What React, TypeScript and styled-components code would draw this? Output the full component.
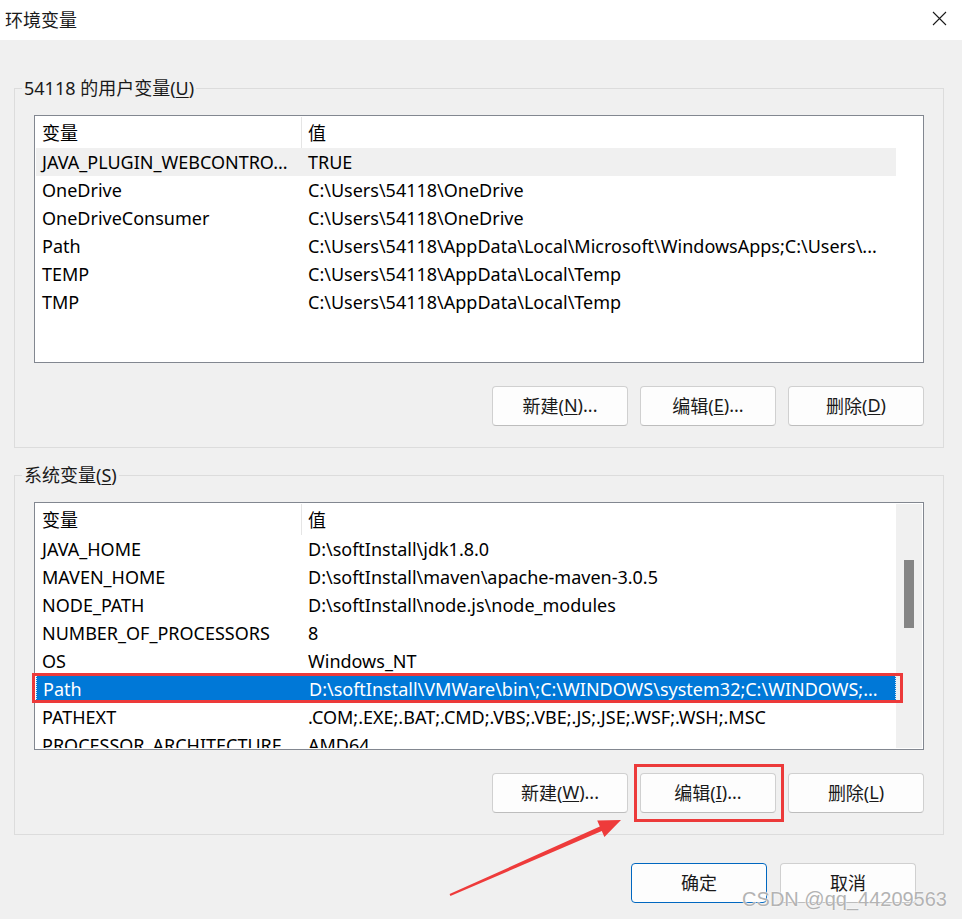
import React from 'react';
import styled, { createGlobalStyle, css } from 'styled-components';

const GlobalStyle = createGlobalStyle`
  html, body {
    margin: 0;
    padding: 0;
    background: #f0f0f0;
  }
  * {
    box-sizing: border-box;
  }
`;

const FONT = `"Noto Sans", "Noto Sans CJK SC", sans-serif`;

const Window = styled.div`
  position: relative;
  width: 962px;
  height: 919px;
  background: #f0f0f0;
  font-family: ${FONT};
  font-size: 18px;
  color: #000;
  overflow: hidden;
`;

const TitleBar = styled.div`
  height: 40px;
  background: #fff;
  display: flex;
  align-items: center;
  justify-content: space-between;
  padding-left: 5px;
`;

const Title = styled.span`
  font-size: 18px;
  color: #1a1a1a;
  margin-top: -3px;
`;

const CloseButton = styled.div`
  width: 46px;
  height: 40px;
  display: flex;
  align-items: center;
  justify-content: center;
  margin-top: -3px;
`;

const Body = styled.div`
  padding: 0 18px 0 14px;
  display: flex;
  flex-direction: column;
`;

const Group = styled.fieldset<{ $top: number }>`
  margin: ${(p) => p.$top}px 0 0;
  border: 1px solid #dcdcdc;
  padding: 15px 19px 21px;
  min-width: 0;
`;

const Legend = styled.legend`
  margin-left: -12px;
  padding: 0 2px;
  line-height: 24px;
  font-size: 18px;
  color: #1a1a1a;
`;

const List = styled.div`
  position: relative;
  height: 248px;
  border: 1px solid #828790;
  background: #fff;
  padding: 1px;
  display: flex;
`;

const Viewport = styled.div`
  flex: 1;
  min-width: 0;
  overflow: hidden;
  display: flex;
  flex-direction: column;
`;

const HeaderRow = styled.div`
  height: 31px;
  flex-shrink: 0;
  display: flex;
  align-items: center;
`;

const HeaderCell = styled.div<{ $first?: boolean }>`
  height: 100%;
  display: flex;
  align-items: center;
  padding-left: 6px;
  padding-bottom: 2px;
  ${(p) =>
    p.$first
      ? css`
          width: 266px;
          border-right: 1px solid #e5e5e5;
        `
      : css`
          flex: 1;
        `}
`;

const Row = styled.div<{ $tone?: 'hover' | 'selected' }>`
  height: 28px;
  flex-shrink: 0;
  display: flex;
  align-items: center;
  white-space: nowrap;
  padding-bottom: 1px;
  ${(p) =>
    p.$tone === 'hover' &&
    css`
      background: #f0f0f0;
    `}
  ${(p) =>
    p.$tone === 'selected' &&
    css`
      background: #0078d7;
      color: #fff;
      border-left: 1px dotted #dbe9f7;
      border-right: 1px dotted #dbe9f7;
    `}
`;

const NameCell = styled.div`
  width: 266px;
  padding-left: 6px;
  overflow: hidden;
  flex-shrink: 0;
`;

const ValueCell = styled.div`
  flex: 1;
  padding-left: 6px;
  overflow: hidden;
`;

const ScrollTrack = styled.div<{ $active?: boolean }>`
  width: 26px;
  flex-shrink: 0;
  background: ${(p) => (p.$active ? '#f0f0f0' : '#fff')};
  padding-left: 8px;
`;

const Thumb = styled.div<{ $offset: number }>`
  margin-top: ${(p) => p.$offset}px;
  width: 10px;
  height: 68px;
  background: #858585;
`;

const RowMark = styled.div<{ $row: number }>`
  position: absolute;
  left: -3px;
  top: ${(p) => 31 + p.$row * 28 - 1}px;
  width: 871px;
  height: 30px;
  border: 3px solid #ec3a3a;
  pointer-events: none;
`;

const ButtonRow = styled.div`
  margin-top: 23px;
  display: flex;
  justify-content: flex-end;
  align-items: center;
  gap: 12px;
`;

const Button = styled.div<{ $primary?: boolean }>`
  width: 136px;
  height: 40px;
  display: flex;
  align-items: center;
  justify-content: center;
  padding-bottom: 2px;
  background: #fdfdfd;
  border: 1px solid ${(p) => (p.$primary ? '#0067c0' : '#d0d0d0')};
  border-bottom-color: ${(p) => (p.$primary ? '#0067c0' : '#bdbdbd')};
  border-radius: 4px;
  color: #1a1a1a;
  font-size: 18px;
`;

const Key = styled.span`
  text-decoration: underline;
  text-underline-offset: 2px;
`;

const Highlight = styled.div`
  position: relative;
  &::after {
    content: '';
    position: absolute;
    top: -9px;
    bottom: -9px;
    left: -6px;
    right: -8px;
    border: 3px solid #ec3a3a;
    pointer-events: none;
  }
`;

const Footer = styled.div`
  margin-top: 28px;
  display: flex;
  justify-content: flex-end;
  gap: 13px;
  padding-right: 28px;
`;

const Overlay = styled.svg`
  position: absolute;
  left: 0;
  top: 0;
  pointer-events: none;
`;

const Watermark = styled.div`
  position: absolute;
  right: 15px;
  bottom: 8px;
  font-family: "Liberation Sans", Arial, sans-serif;
  font-size: 20px;
  color: #b3b3b3;
  text-shadow: 0 0 1px #fff, 0 0 2px #fff;
  white-space: nowrap;
`;

type Variable = { name: string; value: string };

const userVars: Variable[] = [
  { name: 'JAVA_PLUGIN_WEBCONTRO...', value: 'TRUE' },
  { name: 'OneDrive', value: 'C:\\Users\\54118\\OneDrive' },
  { name: 'OneDriveConsumer', value: 'C:\\Users\\54118\\OneDrive' },
  { name: 'Path', value: 'C:\\Users\\54118\\AppData\\Local\\Microsoft\\WindowsApps;C:\\Users\\...' },
  { name: 'TEMP', value: 'C:\\Users\\54118\\AppData\\Local\\Temp' },
  { name: 'TMP', value: 'C:\\Users\\54118\\AppData\\Local\\Temp' },
];

const systemVars: Variable[] = [
  { name: 'JAVA_HOME', value: 'D:\\softInstall\\jdk1.8.0' },
  { name: 'MAVEN_HOME', value: 'D:\\softInstall\\maven\\apache-maven-3.0.5' },
  { name: 'NODE_PATH', value: 'D:\\softInstall\\node.js\\node_modules' },
  { name: 'NUMBER_OF_PROCESSORS', value: '8' },
  { name: 'OS', value: 'Windows_NT' },
  { name: 'Path', value: 'D:\\softInstall\\VMWare\\bin\\;C:\\WINDOWS\\system32;C:\\WINDOWS;...' },
  { name: 'PATHEXT', value: '.COM;.EXE;.BAT;.CMD;.VBS;.VBE;.JS;.JSE;.WSF;.WSH;.MSC' },
  { name: 'PROCESSOR_ARCHITECTURE', value: 'AMD64' },
];

const VarList = ({
  vars,
  hover,
  selected,
  scroll,
}: {
  vars: Variable[];
  hover?: number;
  selected?: number;
  scroll?: boolean;
}) => (
  <List>
    <Viewport>
      <HeaderRow>
        <HeaderCell $first>变量</HeaderCell>
        <HeaderCell>值</HeaderCell>
      </HeaderRow>
      {vars.map((v, i) => (
        <Row key={i} $tone={i === selected ? 'selected' : i === hover ? 'hover' : undefined}>
          <NameCell>{v.name}</NameCell>
          <ValueCell>{v.value}</ValueCell>
        </Row>
      ))}
    </Viewport>
    <ScrollTrack $active={scroll}>{scroll && <Thumb $offset={56} />}</ScrollTrack>
    {selected !== undefined && <RowMark $row={selected} />}
  </List>
);

const App = () => {
  return (
    <Window>
      <GlobalStyle />
      <TitleBar>
        <Title>环境变量</Title>
        <CloseButton>
          <svg width="15" height="15" viewBox="0 0 15 15">
            <path d="M1 1 L14 14 M14 1 L1 14" stroke="#1a1a1a" strokeWidth="1.1" fill="none" />
          </svg>
        </CloseButton>
      </TitleBar>

      <Body>
        <Group $top={36}>
          <Legend>
            54118 的用户变量(<Key>U</Key>)
          </Legend>
          <VarList vars={userVars} hover={0} />
          <ButtonRow>
            <Button>
              新建(<Key>N</Key>)...
            </Button>
            <Button>
              编辑(<Key>E</Key>)...
            </Button>
            <Button>
              删除(<Key>D</Key>)
            </Button>
          </ButtonRow>
        </Group>

        <Group $top={15}>
          <Legend>
            系统变量(<Key>S</Key>)
          </Legend>
          <VarList vars={systemVars} selected={5} scroll />
          <ButtonRow>
            <Button>
              新建(<Key>W</Key>)...
            </Button>
            <Highlight>
              <Button>
                编辑(<Key>I</Key>)...
              </Button>
            </Highlight>
            <Button>
              删除(<Key>L</Key>)
            </Button>
          </ButtonRow>
        </Group>

        <Footer>
          <Button $primary>确定</Button>
          <Button>取消</Button>
        </Footer>
      </Body>

      <Overlay width="962" height="919" viewBox="0 0 962 919">
        <polygon
          points="449.6,894.1 599.8,826.5 597.2,820.6 621,820 604.4,837 601.8,831.1 450.4,895.9"
          fill="#ee3b3b"
        />
      </Overlay>
      <Watermark>CSDN @qq_44209563</Watermark>
    </Window>
  );
};

export default App;
